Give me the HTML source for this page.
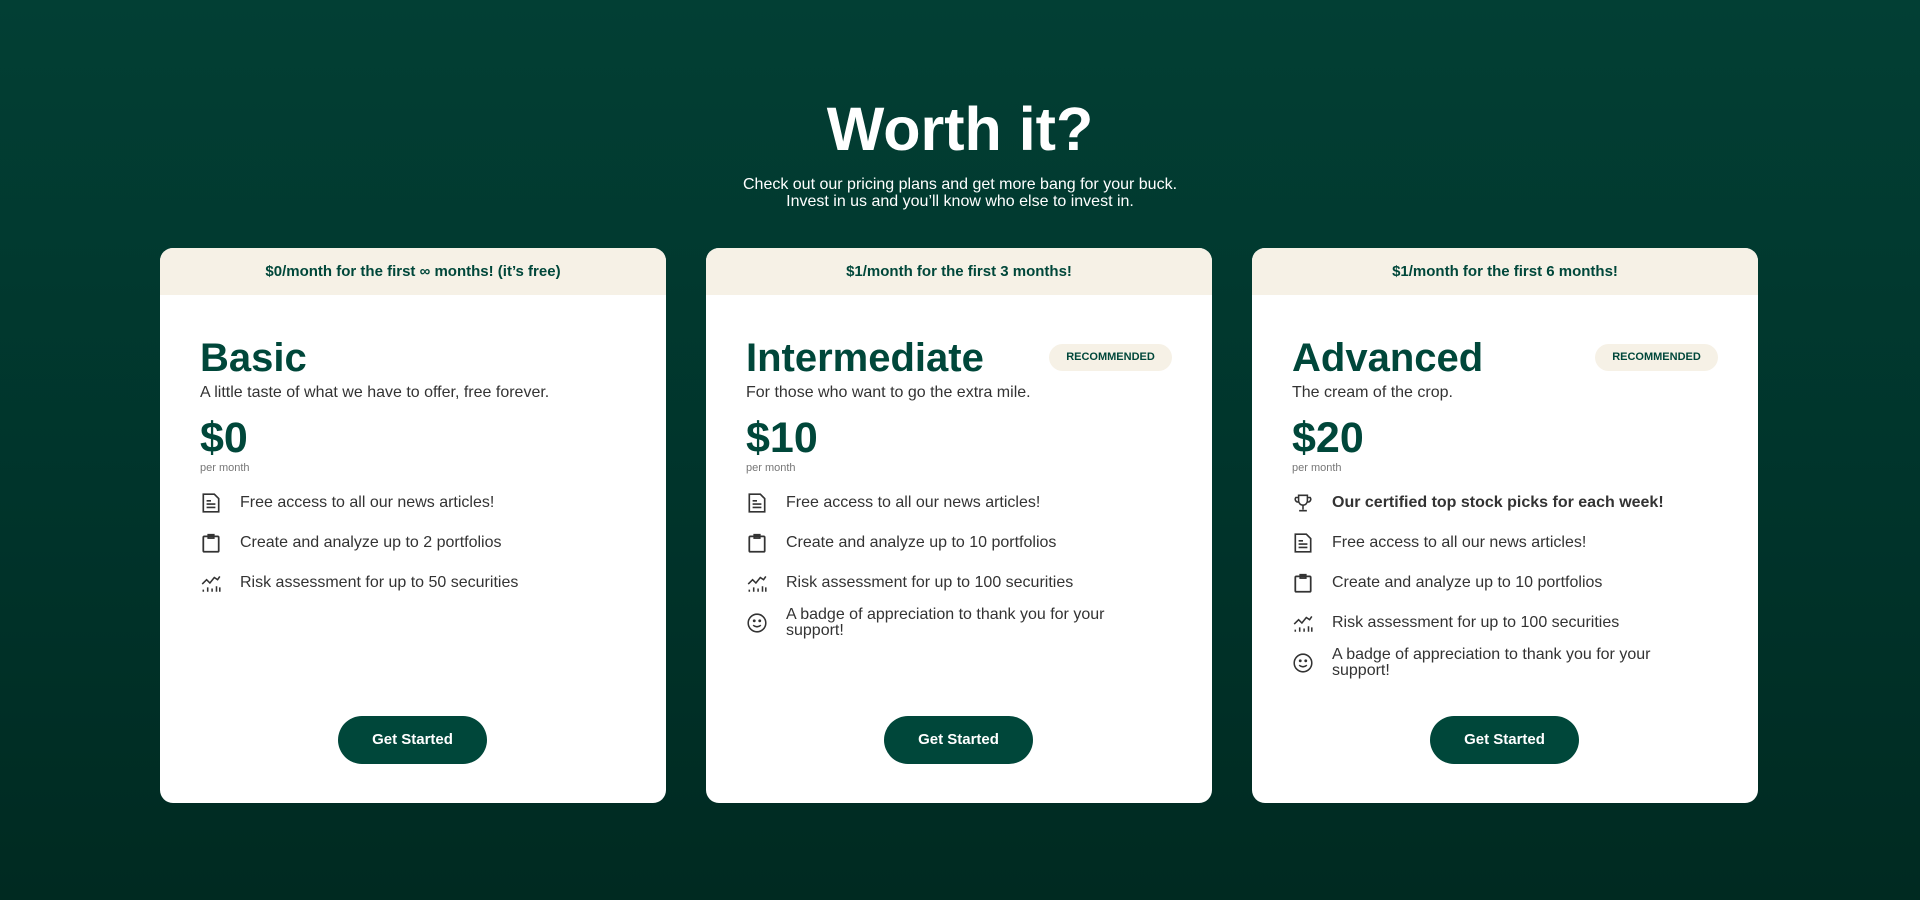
<!DOCTYPE html>
<html><head><meta charset="utf-8"><style>
*{box-sizing:border-box;margin:0;padding:0}
body{width:1920px;height:900px;overflow:hidden;background:linear-gradient(180deg,#023f34 0%,#00332a 60%,#002a21 100%);font-family:"Liberation Sans",sans-serif;color:#fff}
h1{position:absolute;top:94px;width:100%;text-align:center;font-size:61px;font-weight:bold}
.sub{position:absolute;top:176px;width:100%;text-align:center;font-size:16px;line-height:17px}
.card{position:absolute;top:248px;width:506px;height:555px;background:#fff;border-radius:13px;overflow:hidden;color:#00473a}
.band{height:47px;background:#f6f1e6;text-align:center;font-weight:bold;font-size:15px;line-height:47px}
.name{position:absolute;left:40px;top:88px;font-size:40px;font-weight:bold}
.badge{position:absolute;right:40px;top:96px;width:123px;height:27px;border-radius:14px;background:#f6f1e6;font-size:11px;font-weight:bold;text-align:center;line-height:27px}
.desc{position:absolute;left:40px;top:136px;font-size:16px;color:#333}
.price{position:absolute;left:40px;top:166px;font-size:43px;font-weight:bold}
.pm{position:absolute;left:40px;top:214px;font-size:11px;color:#777}
.feats{position:absolute;left:40px;top:235px;width:440px}
.f{position:relative;height:40px;padding-left:40px;font-size:16px;color:#333;display:flex;align-items:center;line-height:16px}
.f svg{position:absolute;left:0;top:50%;margin-top:-11px}
.btn{position:absolute;left:178px;top:468px;width:149px;height:48px;border-radius:24px;background:#00473a;color:#fff;font-weight:bold;font-size:15px;text-align:center;line-height:48px}
</style></head><body>
<h1>Worth it?</h1>
<div class="sub">Check out our pricing plans and get more bang for your buck.<br>Invest in us and you’ll know who else to invest in.</div>

<svg width="0" height="0" style="position:absolute"><defs>
<g id="doc" fill="none" stroke="#333" stroke-width="1.5"><path d="M3 2h10l4 4v12H3z"/><path d="M6 8h4M6 11h8M6 14h8"/></g>
<g id="clip" fill="none" stroke="#333" stroke-width="1.6"><rect x="3" y="4" width="14" height="14" rx="1"/><rect x="7.5" y="2.5" width="5" height="3"/></g>
<g id="chart" fill="none" stroke="#333" stroke-width="1.4"><path d="M2 11l4-4 3 3 4-5 3 2 2-3"/><path d="M3 18v-2M7 18v-4M11 18v-3M15 18v-5M18 18v-4"/></g>
<g id="smile" fill="none" stroke="#333" stroke-width="1.4"><circle cx="10" cy="10" r="8"/><circle cx="7.5" cy="8" r=".6" fill="#333"/><circle cx="12.5" cy="8" r=".6" fill="#333"/><path d="M6.5 12q3.5 3 7 0"/></g>
<g id="troph" fill="none" stroke="#333" stroke-width="1.4"><path d="M6 3h8v5a4 4 0 0 1-8 0z"/><path d="M6 5H3.5a2.5 2.5 0 0 0 2.5 4M14 5h2.5a2.5 2.5 0 0 1-2.5 4M10 12v4M6.5 17h7"/></g>
</defs></svg>

<div class="card" style="left:160px">
<div class="band">$0/month for the first ∞ months! (it’s free)</div>
<div class="name">Basic</div>
<div class="desc">A little taste of what we have to offer, free forever.</div>
<div class="price">$0</div><div class="pm">per month</div>
<div class="feats">
<div class="f"><svg width="22" height="22" viewBox="0 0 20 20"><use href="#doc"/></svg>Free access to all our news articles!</div>
<div class="f"><svg width="22" height="22" viewBox="0 0 20 20"><use href="#clip"/></svg>Create and analyze up to 2 portfolios</div>
<div class="f"><svg width="22" height="22" viewBox="0 0 20 20"><use href="#chart"/></svg>Risk assessment for up to 50 securities</div>
</div>
<div class="btn">Get Started</div>
</div>

<div class="card" style="left:706px">
<div class="band">$1/month for the first 3 months!</div>
<div class="name">Intermediate</div><div class="badge">RECOMMENDED</div>
<div class="desc">For those who want to go the extra mile.</div>
<div class="price">$10</div><div class="pm">per month</div>
<div class="feats">
<div class="f"><svg width="22" height="22" viewBox="0 0 20 20"><use href="#doc"/></svg>Free access to all our news articles!</div>
<div class="f"><svg width="22" height="22" viewBox="0 0 20 20"><use href="#clip"/></svg>Create and analyze up to 10 portfolios</div>
<div class="f"><svg width="22" height="22" viewBox="0 0 20 20"><use href="#chart"/></svg>Risk assessment for up to 100 securities</div>
<div class="f"><svg width="22" height="22" viewBox="0 0 20 20"><use href="#smile"/></svg>A badge of appreciation to thank you for your<br>support!</div>
</div>
<div class="btn">Get Started</div>
</div>

<div class="card" style="left:1252px">
<div class="band">$1/month for the first 6 months!</div>
<div class="name">Advanced</div><div class="badge">RECOMMENDED</div>
<div class="desc">The cream of the crop.</div>
<div class="price">$20</div><div class="pm">per month</div>
<div class="feats">
<div class="f" style="font-weight:bold"><svg width="22" height="22" viewBox="0 0 20 20"><use href="#troph"/></svg>Our certified top stock picks for each week!</div>
<div class="f"><svg width="22" height="22" viewBox="0 0 20 20"><use href="#doc"/></svg>Free access to all our news articles!</div>
<div class="f"><svg width="22" height="22" viewBox="0 0 20 20"><use href="#clip"/></svg>Create and analyze up to 10 portfolios</div>
<div class="f"><svg width="22" height="22" viewBox="0 0 20 20"><use href="#chart"/></svg>Risk assessment for up to 100 securities</div>
<div class="f"><svg width="22" height="22" viewBox="0 0 20 20"><use href="#smile"/></svg>A badge of appreciation to thank you for your<br>support!</div>
</div>
<div class="btn">Get Started</div>
</div>
</body></html>
